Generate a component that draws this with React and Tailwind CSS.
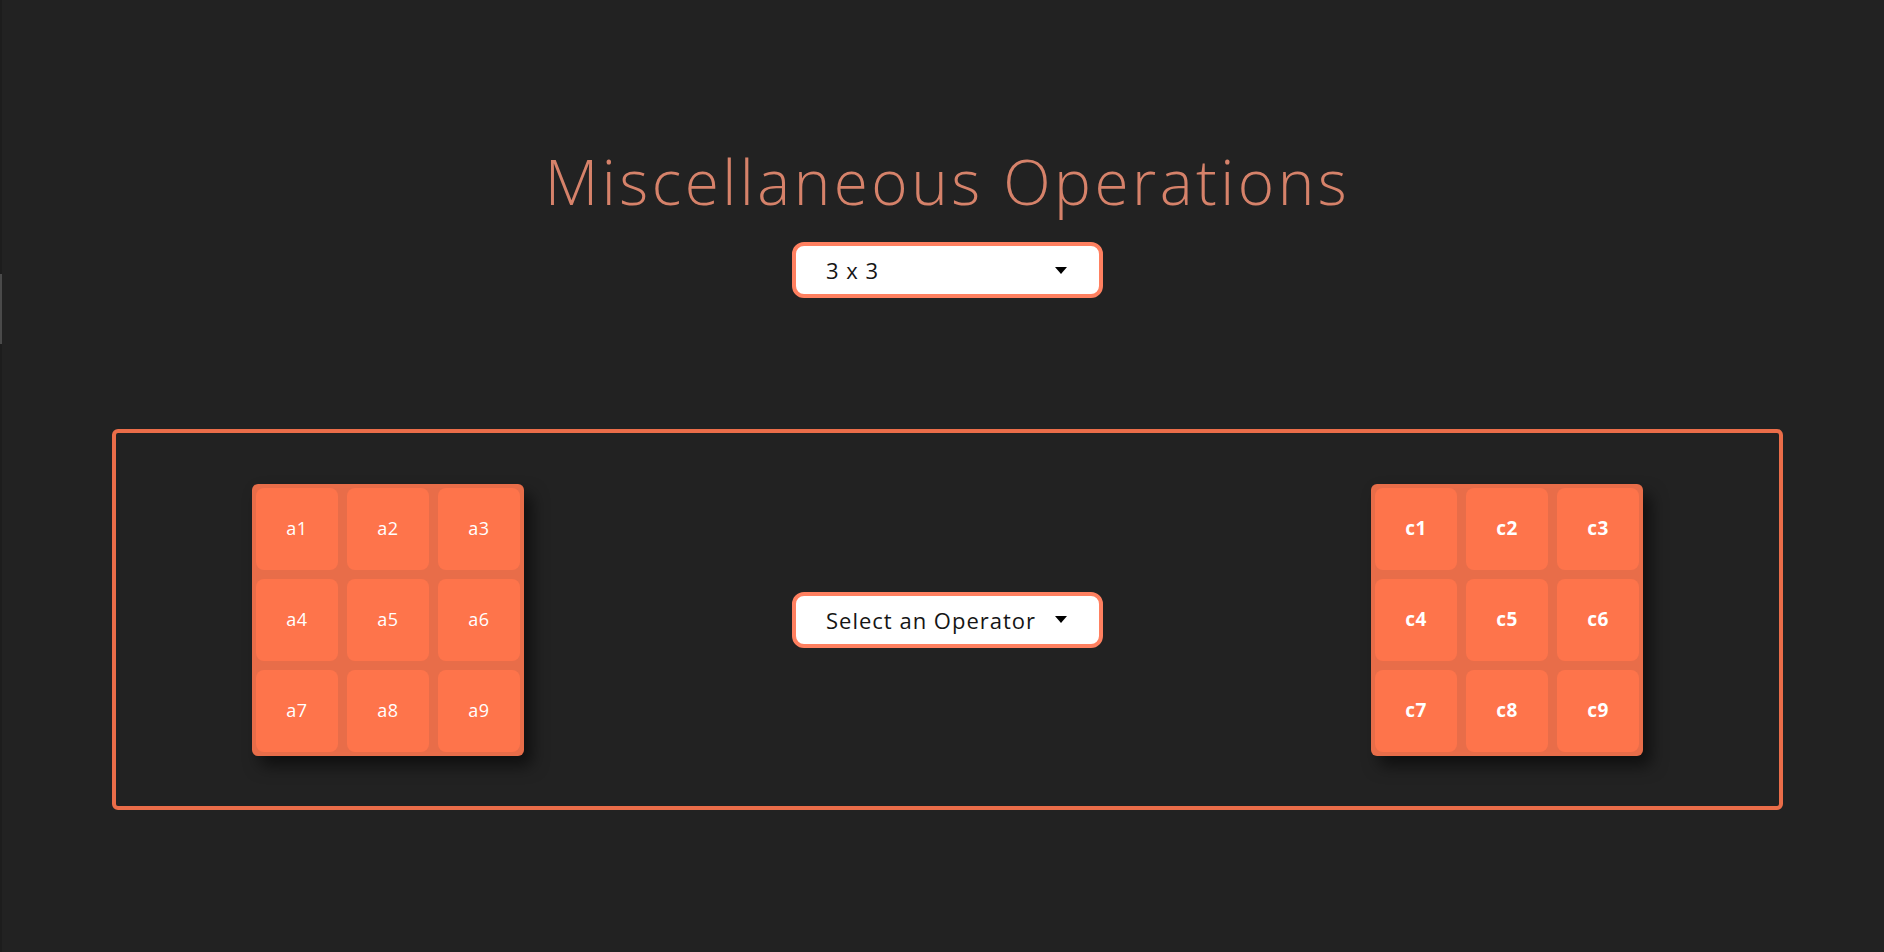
import React from "react";

function Caret() {
  return (
    <svg width="12" height="7" viewBox="0 0 12 7" className="shrink-0">
      <path d="M0 0 L12 0 L6 7 Z" fill="#000" />
    </svg>
  );
}

function Dropdown({ label }) {
  return (
    <div className="w-[311px] h-[56px] border-4 border-[#ff8060] rounded-[12px] bg-white flex items-center justify-between pl-[30px] pr-[32px] shrink-0">
      <span className="text-[22px] text-[#151515] leading-none tracking-[1px]">{label}</span>
      <Caret />
    </div>
  );
}

function Matrix({ prefix, bold }) {
  const cells = [1, 2, 3, 4, 5, 6, 7, 8, 9];
  return (
    <div className="bg-[#e86d49] rounded-[6px] p-[4px] grid grid-cols-3 gap-[9px] shadow-[8px_10px_16px_rgba(0,0,0,0.55)] shrink-0">
      {cells.map((n) => (
        <div
          key={n}
          className={
            "w-[82px] h-[82px] rounded-[8px] bg-[#fe744b] flex items-center justify-center text-white tracking-[0.5px] " +
            (bold ? "font-bold text-[19px]" : "font-normal text-[18px]")
          }
        >
          {prefix}
          {n}
        </div>
      ))}
    </div>
  );
}

export default function App() {
  return (
    <div className="min-h-screen w-full bg-[#222222] relative font-['Open_Sans',sans-serif]">
      <div className="absolute left-0 top-0 w-[2px] h-full bg-[#1d1d1d]" />
      <div className="absolute left-0 top-[274px] w-[2px] h-[70px] bg-[#4a4a4a]" />
      <div className="pl-[11px] pt-[150px] pb-[143px] flex flex-col items-center">
        <h1 className="text-[62px] leading-none font-light text-[#d6826a] tracking-[3.5px]">
          Miscellaneous Operations
        </h1>
        <div className="mt-[30px]">
          <Dropdown label="3 x 3" />
        </div>
        <div className="mt-[131px] w-[1671px] h-[381px] border-4 border-[#ea6d49] rounded-[6px] flex items-center justify-between px-[136px]">
          <Matrix prefix="a" />
          <Dropdown label="Select an Operator" />
          <Matrix prefix="c" bold />
        </div>
      </div>
    </div>
  );
}
